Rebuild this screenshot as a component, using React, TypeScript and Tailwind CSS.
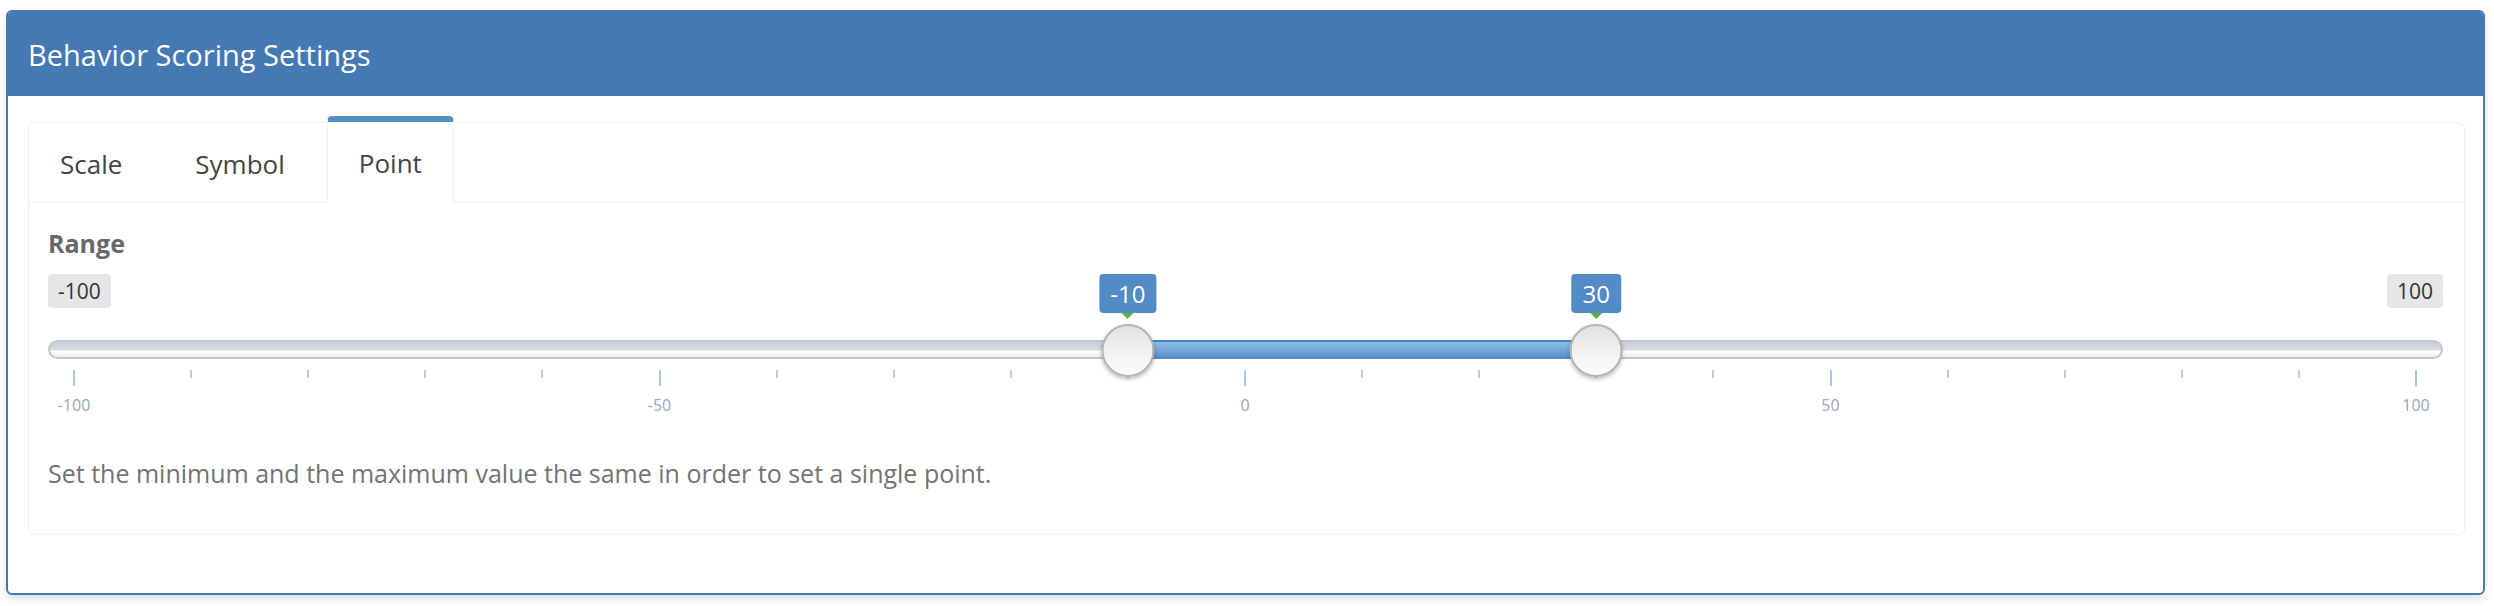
import { useState } from 'react'

const MIN = -100
const MAX = 100
const FROM = -10
const TO = 30

// slider geometry in px: first grid tick offset and full grid span
const GRID_LEFT = 26
const GRID_SPAN = 2342

const pos = (v: number) => GRID_LEFT + ((v - MIN) / (MAX - MIN)) * GRID_SPAN

const TICKS = Array.from({ length: 21 }, (_, i) => MIN + i * 10)
const TABS = ['Scale', 'Symbol', 'Point']

function ValueTip({ value }: { value: number }) {
  return (
    <div
      className="absolute top-0 flex -translate-x-1/2 flex-col items-center"
      style={{ left: pos(value) }}
    >
      <div className="flex h-[39px] items-center rounded-[4px] bg-[#538bc6] px-[11px] text-[24px] leading-none text-white">
        {value}
      </div>
      <div className="h-0 w-0 border-x-[6px] border-t-[6px] border-x-transparent border-t-[#5db33a]" />
    </div>
  )
}

function Handle({ value }: { value: number }) {
  return (
    <div
      className="absolute top-[50px] h-[53px] w-[53px] -translate-x-1/2 rounded-full border-2 border-[#b3b3b3] bg-[linear-gradient(to_bottom,#e1e1e1_0%,#f2f2f2_55%,#fbfbfb_100%)] shadow-[0_2px_4px_rgba(0,0,0,0.28)]"
      style={{ left: pos(value) }}
    />
  )
}

function Badge({ children }: { children: React.ReactNode }) {
  return (
    <span className="flex h-[34px] items-center rounded-[4px] bg-[#e6e6e6] px-[10px] text-[21px] leading-none text-[#333]">
      {children}
    </span>
  )
}

function RangeSlider() {
  return (
    <div className="relative">
      <div className="flex justify-between">
        <Badge>{MIN}</Badge>
        <Badge>{MAX}</Badge>
      </div>

      <div className="relative mt-[32px] h-[19px]">
        <div className="h-full rounded-full border-2 border-[#c6c6c6] bg-[linear-gradient(to_bottom,#c9cfd9_0%,#d5dae3_50%,#ffffff_62%,#efefef_100%)]" />
        <div
          className="absolute top-0 h-full border-t-2 border-[#4b85c5] bg-[linear-gradient(to_bottom,#8cbde4_0%,#74a9da_45%,#5089c6_100%)]"
          style={{ left: pos(FROM), width: pos(TO) - pos(FROM) }}
        />
      </div>

      {/* grid: tick marks and labels sit at their values */}
      <div className="relative mt-[11px] h-[43px]">
        {TICKS.map(v => {
          const major = v % 50 === 0
          return (
            <div key={v}>
              <div
                className={
                  major
                    ? 'absolute top-0 h-[16px] w-[2px] bg-[#aac6e3]'
                    : 'absolute top-0 h-[8px] w-[2px] bg-[#cbcbcb]'
                }
                style={{ left: pos(v) - 1 }}
              />
              {major && (
                <span
                  className="absolute top-[27px] -translate-x-1/2 text-[16px] leading-[16px] text-[#9ba6b6]"
                  style={{ left: pos(v) }}
                >
                  {v}
                </span>
              )}
            </div>
          )
        })}
      </div>

      <ValueTip value={FROM} />
      <ValueTip value={TO} />
      <Handle value={FROM} />
      <Handle value={TO} />
    </div>
  )
}

export default function App() {
  const [tab, setTab] = useState('Point')

  return (
    <div className="min-h-screen bg-white pl-[6px] pt-[10px] font-['Open_Sans',sans-serif]">
      <div className="w-[2479px] overflow-hidden rounded-[6px] border-2 border-[#4479b3] bg-white shadow-[0_4px_8px_rgba(0,0,0,0.12)]">
        <div className="h-[84px] bg-[#4479b3] pl-[20px] pt-[28px] text-[29px] leading-[29px] text-white">
          Behavior Scoring Settings
        </div>

        <div className="pb-[58px] pl-[20px] pr-[18px] pt-[26px]">
          <div className="rounded-[6px] border border-[#efefef] bg-white">
            <div className="flex h-[80px] items-start gap-[11px] border-b border-[#f2f2f2]">
              {TABS.map(t =>
                t === tab ? (
                  <button
                    key={t}
                    className="relative z-10 -mt-[7px] h-[87px] rounded-t-[5px] border-x border-t-[6px] border-x-[#f0f0f0] border-t-[#5390c0] bg-white px-[31px] pb-[33px] pt-[28px] text-[26px] leading-[26px] text-[#444]"
                  >
                    {t}
                  </button>
                ) : (
                  <button
                    key={t}
                    onClick={() => setTab(t)}
                    className="h-[80px] px-[31px] pb-[26px] pt-[28px] text-[26px] leading-[26px] text-[#444]"
                  >
                    {t}
                  </button>
                )
              )}
            </div>

            <div className="pb-[48px] pl-[19px] pr-[21px] pt-[28px]">
              <div className="text-[25px] font-bold leading-[25px] text-[#676767]">Range</div>
              <div className="mt-[18px]">
                <RangeSlider />
              </div>
              <p className="mt-[48px] text-[25px] leading-[25px] text-[#737373]">
                Set the minimum and the maximum value the same in order to set a single point.
              </p>
            </div>
          </div>
        </div>
      </div>
    </div>
  )
}
